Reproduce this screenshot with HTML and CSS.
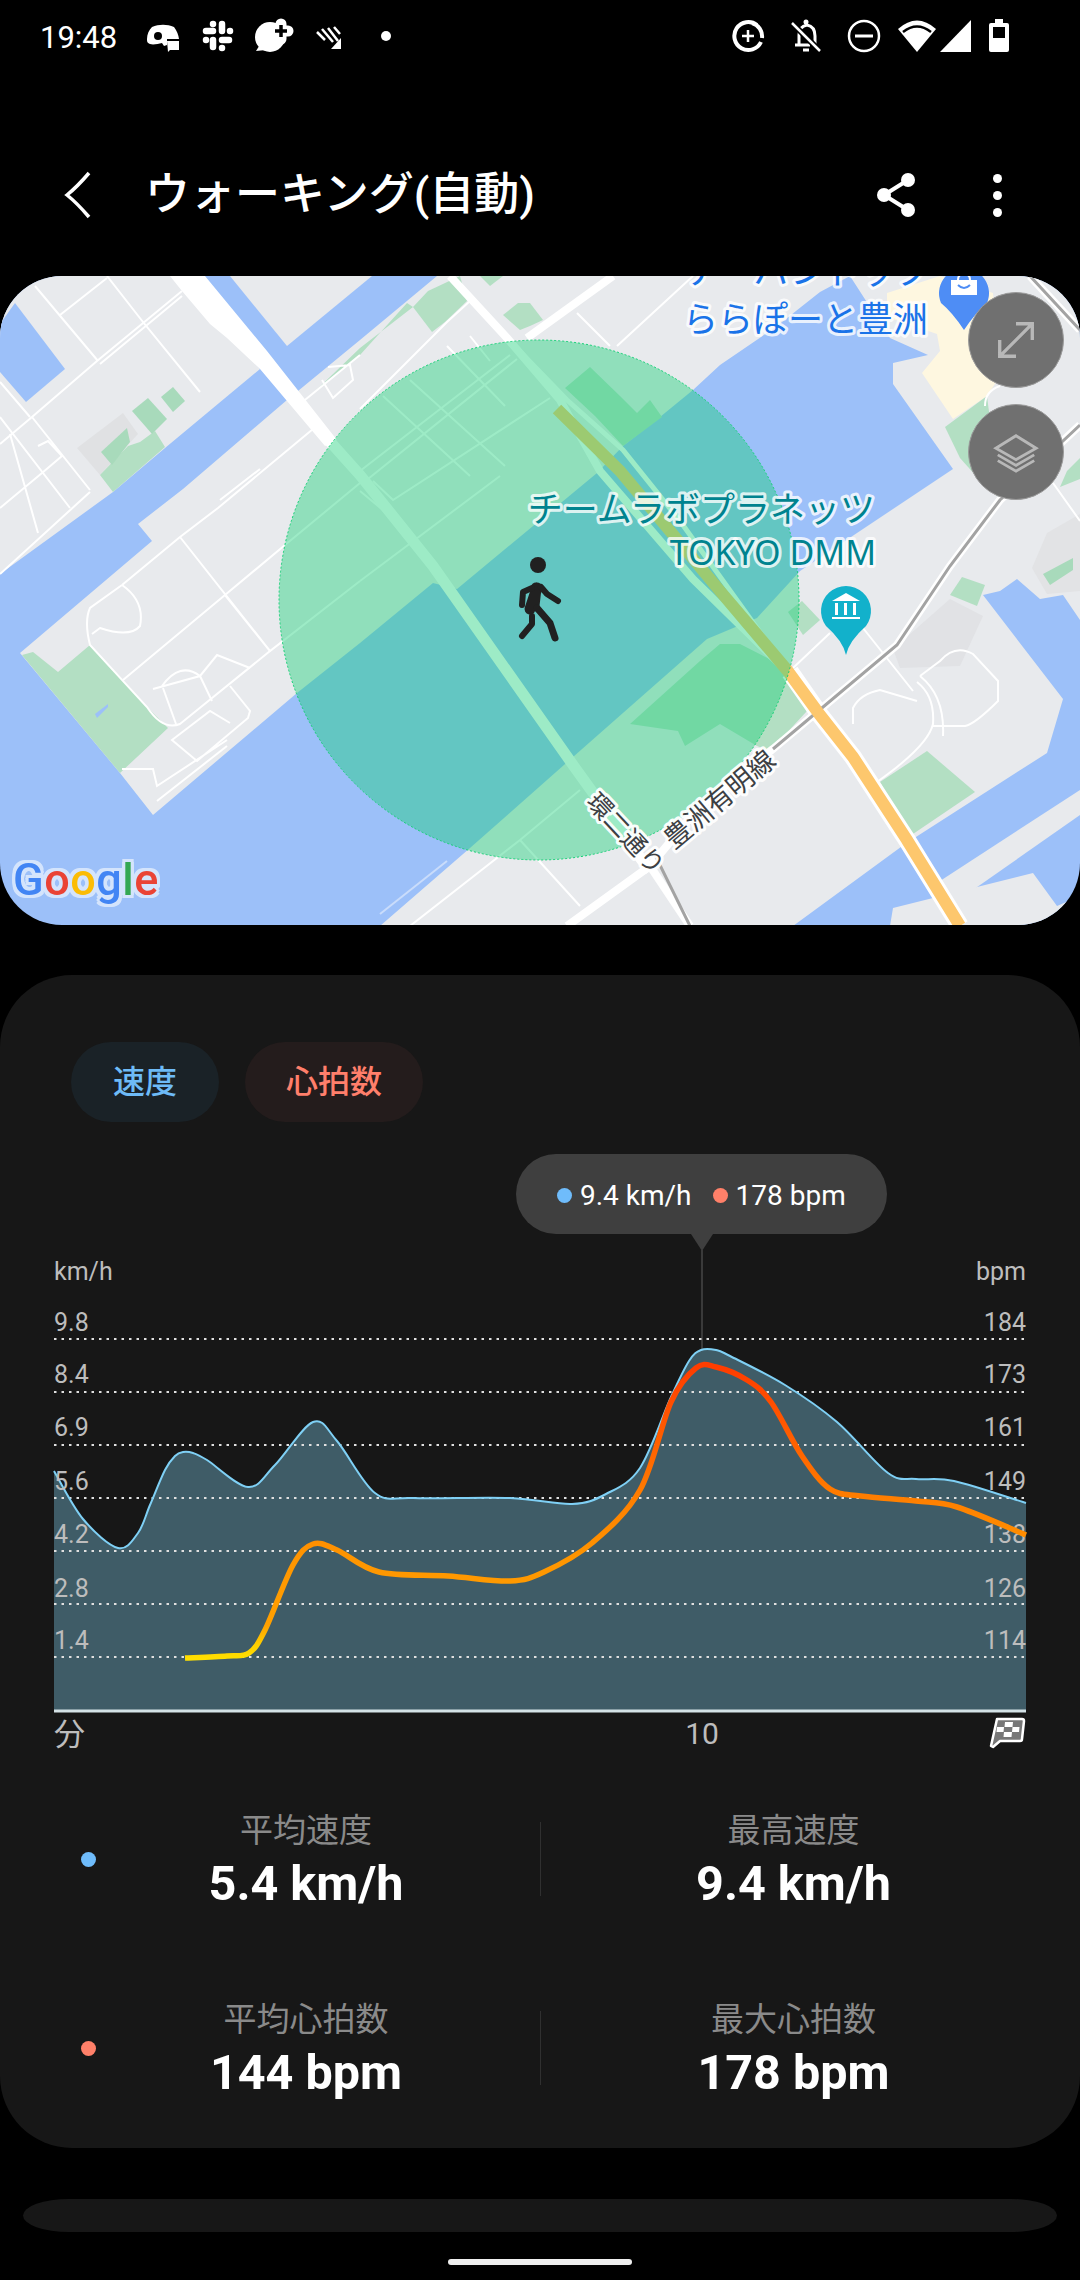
FILE: index.html
```html
<!DOCTYPE html>
<html lang="ja">
  <head>
    <meta charset="UTF-8" />
    <meta name="viewport" content="width=device-width, initial-scale=1.0" />
    <title>ウォーキング(自動)</title>
    <link rel="stylesheet" href="styles.css">
  </head>

  <body>
    <div class="status-bar">
      <span class="clock">19:48</span>
      <svg class="status-left" viewBox="145 16 250 40" fill="#fff">
        <!-- discord -->
        <path d="M152 27c7-3 15-3 22 0 3 4 4.500 8 5 12h-12v6l-3 1-2-3c-4 1-9 2-12 1-3-1-3-3-3-5 0-5 2-9 5-12z" />
        <circle cx="158" cy="36" r="4" fill="#000" />
        <path d="M167 41h12v9h-9l-2 2z" />
        <!-- slack -->
        <g stroke="#fff" stroke-width="6.500" stroke-linecap="round">
          <path d="M206 31h7M213 24h.01M222 24v7M230 31h.01M222 40h7M222 48h.01M213 40v7M206 40h.01" />
        </g>
        <!-- bubble with a plus -->
        <circle cx="270" cy="37" r="15" />
        <path d="M256 51l5-8 5 7z" />
        <path d="M281 24v15M274 31h14" stroke="#fff" stroke-width="11" stroke-linecap="round" />
        <path d="M281 25v12M275 31h12" stroke="#000" stroke-width="3.500" />
        <!-- signal hatch -->
        <path d="M318 29l8 8M323 26l11 13M329 25l10 13M335 24l6 7" stroke="#fff" stroke-width="2.500" transform="translate(-1 3)" />
        <path d="M331 49l10-11v11z" />
        <circle cx="386" cy="36" r="5" />
      </svg>
      <svg class="status-right" viewBox="732 16 280 40" fill="#fff">
        <path d="M757 25a14 14 0 1 0 4 17M752 23a14 14 0 0 1 10 15" fill="none" stroke="#fff" stroke-width="4" />
        <path d="M748 30v12M742 36h12" stroke="#fff" stroke-width="2.500" />
        <path d="M799 44v-9c0-6 3-9 8-10 5 1 8 5 8 11v8M795 45h15M803 50h6" fill="none" stroke="#fff" stroke-width="3" />
        <path d="M792 23l28 28" stroke="#000" stroke-width="6" />
        <path d="M792 23l28 28" stroke="#fff" stroke-width="2.500" />
        <circle cx="806" cy="22" r="2.500" />
        <circle cx="864" cy="36" r="15" fill="none" stroke="#fff" stroke-width="2.500" />
        <path d="M855 36h18" stroke="#fff" stroke-width="3" />
        <path d="M898 29q19-17 38 0l-19 23z" />
        <path d="M903 32q14-11 28 0" fill="none" stroke="#000" stroke-width="2.500" />
        <path d="M971 20v32h-31z" />
        <path fill-rule="evenodd" d="M995 19h8v4h4q2 0 2 2v25q0 2-2 2h-16q-2 0-2-2v-25q0-2 2-2h4zM993 27v11h12v-11z" />
      </svg>
    </div>

    <header class="app-bar">
      <svg class="back" viewBox="0 0 30 50" fill="none" stroke="#fff" stroke-width="3.500">
        <path d="M26 3Q14 17 4 25q10 8 22 22" />
      </svg>
      <h1 class="title">ウォーキング(自動)</h1>
      <svg class="share" viewBox="0 0 44 48" fill="#fff">
        <circle cx="34" cy="9" r="7" />
        <circle cx="10" cy="24" r="7" />
        <circle cx="34" cy="39" r="7" />
        <path d="M34 9L10 24l24 15" fill="none" stroke="#fff" stroke-width="4" />
      </svg>
      <div class="more"><i></i><i></i><i></i></div>
    </header>

    <section class="map">
      <svg class="map-canvas" viewBox="0 0 1080 650">
        <rect width="1080" height="650" fill="#9cc0f9" />

        <!-- land -->
        <g fill="#e8eaed">
          <path d="M0 0H180L260 93 165 172 113 216 0 298Z" />
          <path d="M230 0H372L287 70Z" />
          <path d="M20 377L152 265 138 248 183 213 287 124 360 64 437 0H850L820 16 777 50 720 89 693 114 660 141 623 170 597 197 457 313 433 307 360 367 297 417 153 539 120 497Z" />
          <path d="M380 650L470 572 573 481 707 363 757 342 800 295 953 193 893 108 893 87 928 79 890 62 850 0H1080V344L1063 319 1040 323 1017 303 1000 315 983 319 1063 423 1047 477 905 568 793 650Z" />
          <path d="M940 605L1080 514V539L950 630Z" />
          <path d="M890 650L893 632 1033 597 1057 630 1080 620V650Z" />
        </g>
        <path d="M15 27L65 93 26 126 0 96V48Z" fill="#9cc0f9" />

        <!-- buildings and sand -->
        <path d="M77 172L123 137 138 158 100 199Z" fill="#e0e1e3" />
        <path d="M893 373L950 323 983 340 960 390 900 392Z" fill="#e1e2e5" />
        <path d="M1032 292L1047 257 1080 238V315L1047 318Z" fill="#e2e3e5" />
        <path d="M887 17L940 0 993 17 1000 100 987 120 953 143 922 97 940 75 937 58 887 41Z" fill="#fef7e0" />

        <!-- parks -->
        <g fill="#b3dfc3">
          <path d="M22 379L33 376 58 396 90 369 123 404 147 431 168 452 120 497Z" />
          <path d="M100 199L113 216 165 171 155 155 140 166 128 170Z" />
          <path d="M300 128L360 79 407 27 413 31 360 72 305 125Z" />
          <path d="M413 31L428 15 460 0 467 25 445 46 432 56Z" />
          <path d="M480 0H503L490 10Z" />
          <path d="M503 39L518 27 530 27 543 44 530 50 520 54Z" />
          <path d="M565 112L590 91 620 120 637 137 650 124 662 141 623 170 595 140Z" />
          <path d="M630 448L700 385 720 368 740 368 787 392 807 435 770 475 757 470 720 448 685 470 678 455Z" />
          <path d="M788 336L802 325 820 344 803 359Z" />
          <path d="M950 319L962 301 985 309 977 330Z" />
          <path d="M880 506L927 475 975 516 910 560Z" />
          <path d="M945 151L987 120 1000 222 985 210 960 182Z" />
          <path d="M1067 195L1080 182V203L1060 211Z" />
        </g>
        <g fill="#a8dabb">
          <path d="M132 135L148 122 167 143 152 158Z" />
          <path d="M161 121L173 111 185 125 173 136Z" />
          <path d="M101 176L127 152 130 166 112 189Z" />
          <path d="M1043 298L1073 282 1073 294 1050 309Z" />
        </g>
        <path d="M95 438L108 428V431L97 442Z" fill="#9cc0f9" />

        <!-- thin streets -->
        <g class="street">
          <path d="M35 10L98 85M107 0L143 46 200 116M60 39L107 2M0 168L32 141 97 85 182 15M100 88L182 20" />
          <path d="M0 141L70 232M32 141L90 214M0 232L42 197 62 180M0 298L90 216M10 158L38 257M0 106L30 141M38 170L48 165 62 180" />
          <path d="M122 309L180 261 218 232 313 153M123 404L225 319 285 269 360 207M180 261L270 375 360 305M225 319L270 375" />
          <path d="M122 309L90 332Q84 345 90 369L147 431Q163 455 180 448L270 375" />
          <path d="M122 309Q145 325 140 350 130 362 100 352L92 358M220 224L260 193" />
          <path d="M153 413L200 400 217 379 250 392M162 410Q180 385 200 400L212 425M163 412L176 448" />
          <path d="M230 410L250 435 248 442 197 485 172 464 210 435 230 447M122 493L153 493 157 510 227 464M157 525L227 470" />
          <path d="M322 104L333 122 353 104 350 89 328 91M300 128L360 79" />
          <path d="M360 195L510 79M368 203L517 83M373 205L393 224 550 122M360 133L447 46 470 25M383 120L470 200M410 104L505 190M447 70L505 130M470 60L490 85" />
          <path d="M360 305L500 200M390 240L360 215" />
          <path d="M410 650L520 564 580 514M520 564L580 630" />
          <path d="M577 37L610 70M617 70L693 0M793 392L830 357M863 352L913 415" />
          <path d="M917 406Q935 420 933 448 928 470 877 506M853 448V432Q860 418 880 414L917 425M920 400Q945 420 943 460M933 450H965Q975 448 998 425V405L973 378Q955 368 940 385L920 400" />
          <path d="M1053 207L1080 245M985 130Q985 115 1000 110" />
        </g>
        <path class="shore" d="M380 638L447 585" />

        <!-- big roads -->
        <g class="road">
          <path d="M450 0L507 62 560 124 600 195 693 303 790 398" />
          <path d="M507 62L567 124 623 174 680 245 790 398" stroke-width="5" />
          <path d="M527 62L613 0" />
          <path d="M325 160L360 199 433 290 573 489 627 564 650 595" stroke-width="11" />
          <path d="M790 396L820 439 853 481 907 564 960 650" stroke-width="18" />
          <path d="M567 650L650 590 700 530 773 473 897 369 950 290 1000 224 1080 149" />
          <path d="M650 590L690 650" />
          <path d="M1030 0L1080 54" />
        </g>
        <path d="M170 0H205L267 75 337 164 325 170 260 93 227 62 210 48 182 15Z" fill="#fff" />
        <g class="rail">
          <path d="M773 473L897 369 950 290 1000 224 1080 149M653 575L690 650M1030 0L1080 54" />
        </g>
        <path class="highway" d="M557 133L620 195 720 315 787 394 820 439 853 481 907 564 960 650" />

        <!-- activity radius -->
        <circle class="radius" cx="539" cy="324" r="260" />

        <!-- walker -->
        <g class="walker">
          <circle cx="538" cy="289" r="8" stroke="none" fill="#212121" />
          <path d="M537 312L530 333M536 312L534 330" stroke-width="11" />
          <path d="M532 312L523 316 522 329M541 311L547 318 558 325" stroke-width="6" />
          <path d="M537 332L550 347 555 362" stroke-width="7" />
          <path d="M532 340V348L522 360" stroke-width="6" />
        </g>

        <!-- shop pin -->
        <path d="M964 54Q952 36 941 27A25 25 0 1 1 987 27Q976 36 964 54Z" fill="#4e8df5" />
        <rect x="951" y="4" width="26" height="15" fill="#fff" />
        <path d="M958 9q6 6 12 0" fill="none" stroke="#4e8df5" stroke-width="2" />
        <path d="M958 4Q958-2 964-2 970-2 970 4" fill="none" stroke="#fff" stroke-width="2" />

        <!-- museum pin -->
        <path d="M846 379Q843 365 826 350A25 25 0 1 1 866 350Q849 365 846 379Z" fill="#12b1cb" />
        <path d="M846 317L860 325H832ZM835 327h3v12h-3zM844 327h3v12h-3zM853 327h3v12h-3zM832 341h28v2h-28z" fill="#fff" />

        <text class="label label-blue" x="686" y="8">アーバンドック</text>
        <text class="label label-blue" x="683" y="56">ららぽーと豊洲</text>
        <text class="label label-teal" x="875" y="246" text-anchor="end">チームラボプラネッツ</text>
        <text class="label label-teal label-latin" x="876" y="289" text-anchor="end">TOKYO DMM</text>
        <text class="label label-road label-ring" transform="translate(585 527) rotate(47)">環二通り</text>
        <text class="label label-road" transform="translate(674 574) rotate(-40)">豊洲有明線</text>

        <text class="google" x="13" y="619"><tspan fill="#4285f4">G</tspan><tspan fill="#ea4335">o</tspan><tspan fill="#fbbc05">o</tspan><tspan fill="#4285f4">g</tspan><tspan fill="#34a853">l</tspan><tspan fill="#ea4335">e</tspan></text>
      </svg>

      <button class="map-btn map-btn-expand">
        <svg viewBox="0 0 48 48" fill="none" stroke="#b8b8b8" stroke-width="3.500">
          <path d="M8 40L40 8M24 7h17v17M7 24v17h17" />
        </svg>
      </button>
      <button class="map-btn map-btn-layers">
        <svg viewBox="0 0 48 48" fill="none" stroke="#b8b8b8" stroke-width="3">
          <path d="M24 7L45 20 24 32 3 20ZM5 27L24 38 43 27M5 33L24 44 43 33" />
        </svg>
      </button>
    </section>

    <section class="card">
      <div class="chips">
        <span class="chip chip-speed">速度</span>
        <span class="chip chip-heart">心拍数</span>
      </div>

      <div class="tooltip">
        <span class="tip-dot dot-speed"></span><span>9.4 km/h</span>
        <span class="tip-dot dot-heart"></span><span>178 bpm</span>
      </div>

      <svg class="chart" viewBox="0 1234 1080 532">
        <defs>
          <linearGradient id="heartGrad" gradientUnits="userSpaceOnUse" x1="0" y1="1660" x2="0" y2="1367">
            <stop offset="0" stop-color="#ffe000" />
            <stop offset="0.05" stop-color="#ffd000" />
            <stop offset="0.12" stop-color="#ffa000" />
            <stop offset="0.35" stop-color="#ff9500" />
            <stop offset="0.55" stop-color="#ff7f00" />
            <stop offset="0.7" stop-color="#ff6600" />
            <stop offset="1" stop-color="#ff3d00" />
          </linearGradient>
        </defs>

        <path class="tip-arrow" d="M691 1234H713L702 1251Z" />
        <path class="tip-line" d="M702 1250V1366" />

        <path id="speedArea" class="speed-area" />
        <path class="grid" d="M54 1339H1026M54 1392H1026M54 1445H1026M54 1498H1026M54 1551H1026M54 1604H1026M54 1657H1026" />
        <path class="axis" d="M54 1711H1026" />
        <path id="speedLine" class="speed-line" />

        <g class="tick">
          <text x="54" y="1280">km/h</text>
          <text x="54" y="1331">9.8</text>
          <text x="54" y="1383">8.4</text>
          <text x="54" y="1436">6.9</text>
          <text x="54" y="1490">5.6</text>
          <text x="54" y="1543">4.2</text>
          <text x="54" y="1597">2.8</text>
          <text x="54" y="1649">1.4</text>
        </g>
        <g class="tick tick-right">
          <text x="1026" y="1280">bpm</text>
          <text x="1026" y="1331">184</text>
          <text x="1026" y="1383">173</text>
          <text x="1026" y="1436">161</text>
          <text x="1026" y="1490">149</text>
          <text x="1026" y="1543">138</text>
          <text x="1026" y="1597">126</text>
          <text x="1026" y="1649">114</text>
        </g>

        <path id="heartLine" class="heart-line" stroke="url(#heartGrad)" />

        <text class="x-label x-label-cjk" x="54" y="1745">分</text>
        <text class="x-label" x="702" y="1744" text-anchor="middle">10</text>

        <!-- finish flag -->
        <path d="M997 1719h25q2 0 2 2l-2 18q0 2-2 2h-20l-7 6-2-1z" fill="#777" stroke="#fff" stroke-width="2.500" stroke-linejoin="round" />
        <path d="M1005 1722h8l-.500 5h-8zM997 1727h7l-.500 5h-7zM1012.500 1727h7l-.500 5h-7zM1004 1732h8l-.500 5h-8z" fill="#fff" />
      </svg>

      <div class="stat-row">
        <span class="stat-dot dot-speed"></span>
        <div class="stat">
          <span class="stat-name">平均速度</span>
          <span class="stat-value">5.4 km/h</span>
        </div>
        <span class="stat-divider"></span>
        <div class="stat">
          <span class="stat-name">最高速度</span>
          <span class="stat-value">9.4 km/h</span>
        </div>
      </div>

      <div class="stat-row">
        <span class="stat-dot dot-heart"></span>
        <div class="stat">
          <span class="stat-name">平均心拍数</span>
          <span class="stat-value">144 bpm</span>
        </div>
        <span class="stat-divider"></span>
        <div class="stat">
          <span class="stat-name">最大心拍数</span>
          <span class="stat-value">178 bpm</span>
        </div>
      </div>
    </section>

    <div class="next-card"></div>
    <div class="nav-pill"></div>

    <script src="script.js"></script>
  </body>
</html>
```

FILE: styles.css
```css
* {
  box-sizing: border-box;
}

body {
  margin: 0;
  width: 1080px;
  height: 2280px;
  overflow: hidden;
  background: #000;
  color: #fff;
  font-family: Roboto, "Noto Sans CJK JP", sans-serif;
}

/* status bar */
.status-bar {
  display: flex;
  align-items: center;
  height: 72px;
  padding-left: 40px;
}

.clock {
  width: 105px;
  padding-top: 2px;
  font-size: 31px;
}

.status-left {
  width: 250px;
  height: 40px;
}

.status-right {
  width: 280px;
  height: 40px;
  margin-left: 337px;
}

/* header */
.app-bar {
  display: flex;
  align-items: center;
  height: 204px;
  padding-top: 42px;
  padding-left: 63px;
}

.back {
  width: 30px;
  height: 50px;
}

.title {
  flex: 1;
  margin: 0 0 0 52px;
  font-size: 45px;
  font-weight: 500;
  line-height: 70px;
}

.share {
  width: 44px;
  height: 48px;
  margin-right: 75px;
}

.more {
  display: flex;
  flex-direction: column;
  gap: 8px;
  margin-right: 78px;
}

.more i {
  width: 9px;
  height: 9px;
  border-radius: 50%;
  background: #fff;
}

/* map */
.map {
  position: relative;
  height: 649px;
  border-radius: 62px;
  overflow: hidden;
}

.map-canvas {
  display: block;
  width: 1080px;
  height: 650px;
}

.street {
  fill: none;
  stroke: #fff;
  stroke-width: 2;
}

.shore {
  fill: none;
  stroke: #c9dcfb;
  stroke-width: 2;
}

.road {
  fill: none;
  stroke: #fff;
  stroke-width: 8;
}

.rail {
  fill: none;
  stroke: #a3a3a3;
  stroke-width: 3;
}

.highway {
  fill: none;
  stroke: #fdc76d;
  stroke-width: 12;
}

.radius {
  fill: rgba(22, 208, 118, 0.42);
  stroke: #16d076;
  stroke-width: 1;
  stroke-dasharray: 2 2;
}

.walker {
  fill: none;
  stroke: #212121;
  stroke-linecap: round;
  stroke-linejoin: round;
}

.label {
  font-family: "Noto Sans CJK JP", sans-serif;
  font-size: 35px;
  paint-order: stroke;
  stroke: rgba(255, 255, 255, 0.8);
  stroke-width: 6px;
  stroke-linejoin: round;
}

.label-blue {
  fill: #1a73e8;
}

.label-teal {
  fill: #00838f;
}

.label-latin {
  font-family: "Noto Sans", sans-serif;
  font-size: 34px;
}

.label-road {
  fill: #3c4043;
  font-size: 27px;
  stroke: rgba(255, 255, 255, 0.95);
}

.label-ring {
  font-size: 25px;
}

.google {
  font-family: Roboto, sans-serif;
  font-size: 45px;
  font-weight: 500;
  letter-spacing: 0.5px;
  filter: drop-shadow(3px 0 0 #d4e4fc) drop-shadow(-3px 0 0 #d4e4fc) drop-shadow(0 3px 0 #d4e4fc) drop-shadow(0 -3px 0 #d4e4fc);
}

.map-btn {
  position: absolute;
  right: 16px;
  display: flex;
  align-items: center;
  justify-content: center;
  width: 96px;
  height: 96px;
  padding: 0;
  border: 1px solid #9a9a9a;
  border-radius: 50%;
  background: #707070;
}

.map-btn svg {
  width: 46px;
  height: 46px;
}

.map-btn-expand {
  top: 16px;
}

.map-btn-layers {
  top: 128px;
}

/* chart card */
.card {
  height: 1173px;
  margin-top: 50px;
  padding-top: 67px;
  border-radius: 72px;
  background: #171717;
}

.chips {
  display: flex;
  gap: 26px;
  padding-left: 71px;
}

.chip {
  display: flex;
  align-items: center;
  justify-content: center;
  height: 80px;
  padding-bottom: 6px;
  border-radius: 40px;
  font-size: 32px;
  font-weight: 500;
}

.chip-speed {
  width: 148px;
  background: #1a2227;
  color: #6ebbf7;
}

.chip-heart {
  width: 178px;
  background: #241c1c;
  color: #ff7f6b;
}

.tooltip {
  display: flex;
  align-items: center;
  width: 371px;
  height: 80px;
  margin: 32px 0 0 516px;
  padding: 3px 0 0 41px;
  border-radius: 40px;
  background: #3f3f3f;
  font-size: 28px;
}

.tip-dot {
  width: 15px;
  height: 15px;
  margin-right: 8px;
  border-radius: 50%;
}

.tip-dot + span {
  margin-right: 21px;
}

.dot-speed {
  background: #6fbcfb;
}

.dot-heart {
  background: #ff8069;
}

.chart {
  display: block;
  width: 1080px;
  height: 532px;
}

.tip-arrow {
  fill: #3f3f3f;
}

.tip-line {
  stroke: #3a3a3a;
  stroke-width: 2;
}

.speed-area {
  fill: #3f5c67;
}

.speed-line {
  fill: none;
  stroke: #7fd0f5;
  stroke-width: 2;
}

.heart-line {
  fill: none;
  stroke-width: 5.5;
}

.grid {
  fill: none;
  stroke: #e0e0e0;
  stroke-width: 2;
  stroke-dasharray: 2.5 5;
}

.axis {
  stroke: #d4e2e6;
  stroke-width: 3;
}

.tick {
  fill: #bdbdbd;
  font-size: 25px;
}

.tick-right {
  text-anchor: end;
}

.x-label {
  fill: #bdbdbd;
  font-size: 30px;
}

.x-label-cjk {
  font-size: 31px;
}

/* stats */
.stat-row {
  display: grid;
  grid-template-columns: 72px 468px 1px 505px;
  align-items: center;
  height: 100px;
  margin-top: 40px;
}

.stat-row + .stat-row {
  margin-top: 89px;
}

.stat-dot {
  width: 15px;
  height: 15px;
  margin-left: 81px;
  border-radius: 50%;
}

.stat {
  display: flex;
  flex-direction: column;
  align-items: center;
}

.stat-name {
  color: #8a8a8a;
  font-size: 33px;
  line-height: 50px;
}

.stat-value {
  font-size: 48.5px;
  font-weight: 700;
  line-height: 56px;
}

.stat-divider {
  height: 74px;
  background: #303030;
}

/* bottom */
.next-card {
  width: 1034px;
  height: 33px;
  margin: 51px 0 0 23px;
  border-radius: 46px / 50%;
  background: #171717;
}

.nav-pill {
  width: 184px;
  height: 6px;
  margin: 27px 0 0 448px;
  border-radius: 3px;
  background: #eee;
}
```

FILE: script.js
```js
// sampled from the workout, page px
const speed = [[54,1471],[83,1519],[118,1548],[138,1533],[150,1505],[165,1470],[175,1456],[183,1452],[193,1453],[207,1460],[248,1487],[275,1465],[313,1422],[337,1441],[375,1493],[413,1498],[510,1498],[572,1504],[606,1494],[640,1468],[671,1397],[689,1361],[701,1350],[716,1350],[730,1356],[785,1385],[837,1422],[888,1473],[916,1479],[954,1481],[1026,1503]];
const heart = [[185,1658],[227,1656],[249,1653],[265,1630],[293,1565],[313,1544],[337,1550],[379,1572],[448,1576],[510,1581],[544,1572],[592,1543],[640,1490],[671,1402],[696,1368],[716,1367],[747,1380],[771,1402],[802,1456],[830,1489],[861,1496],[916,1501],[957,1507],[1026,1535]];

function smooth(points) {
  let d = `M${points[0][0]} ${points[0][1]}`;
  for (let i = 0; i < points.length - 1; i++) {
    const p0 = points[i - 1] || points[i];
    const p1 = points[i];
    const p2 = points[i + 1];
    const p3 = points[i + 2] || p2;
    const c1x = p1[0] + (p2[0] - p0[0]) / 6;
    const c1y = p1[1] + (p2[1] - p0[1]) / 6;
    const c2x = p2[0] - (p3[0] - p1[0]) / 6;
    const c2y = p2[1] - (p3[1] - p1[1]) / 6;
    d += `C${c1x} ${c1y} ${c2x} ${c2y} ${p2[0]} ${p2[1]}`;
  }
  return d;
}

const speedPath = smooth(speed);
document.getElementById("speedLine").setAttribute("d", speedPath);
document.getElementById("speedArea").setAttribute("d", speedPath + "L1026 1711L54 1711Z");
document.getElementById("heartLine").setAttribute("d", smooth(heart));
```
